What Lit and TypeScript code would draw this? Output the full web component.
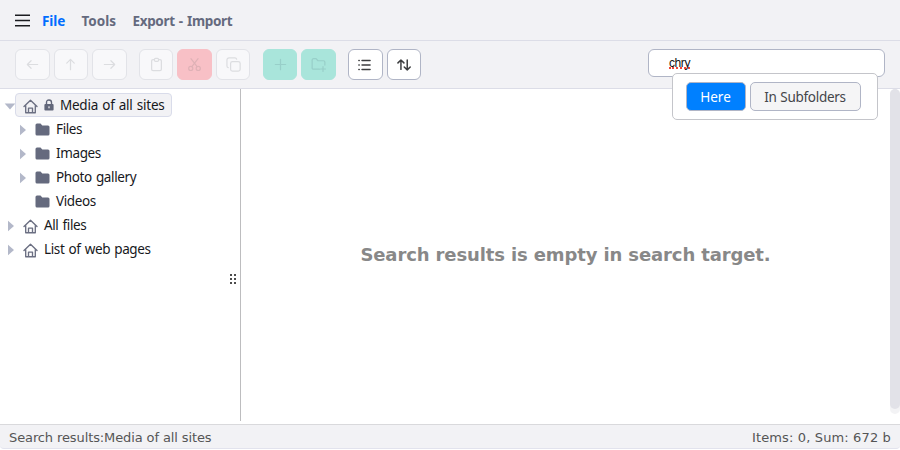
import { LitElement, html, svg, css, nothing } from 'lit';
import { customElement, property } from 'lit/decorators.js';
import { classMap } from 'lit/directives/class-map.js';

const ICONS: Record<string, unknown> = {
  left: svg`<path d="M13.5 8H2.5M6.5 4L2.5 8L6.5 12"/>`,
  up: svg`<path d="M8 13.5V2.5M4 6.5L8 2.5L12 6.5"/>`,
  right: svg`<path d="M2.5 8H13.5M9.5 4L13.5 8L9.5 12"/>`,
  paste: svg`<path d="M5.8 2.8H4.3Q2.8 2.8 2.8 4.3V13Q2.8 14.5 4.3 14.5H11.7Q13.2 14.5 13.2 13V4.3Q13.2 2.8 11.7 2.8H10.2"/><rect x="5.8" y="1.4" width="4.4" height="3.2" rx="1.2"/>`,
  cut: svg`<circle cx="4" cy="12.2" r="2.2"/><circle cx="12" cy="12.2" r="2.2"/><path d="M5.2 10.3L11.8 1.8M10.8 10.3L4.2 1.8"/>`,
  copy: svg`<rect x="4.9" y="4.9" width="10.2" height="10.2" rx="2"/><path d="M2.4 11.4Q1 11 1 9.6V3.4Q1 1 3.4 1H9.6Q11 1 11.4 2.4"/>`,
  plus: svg`<path d="M8 2.5V13.5M2.5 8H13.5"/>`,
  folderAdd: svg`<path d="M9 13H2.8Q1.2 13 1.2 11.4V3.4Q1.2 1.8 2.8 1.8H5.4L7.4 4H13.2Q14.8 4 14.8 5.6V8.6M12.8 10.2V15.4M10.2 12.8H15.4"/>`,
  list: svg`<path d="M4.6 2.8H13.8M4.6 8H13.8M4.6 13.2H13.8M1 2.8H1.4M1 8H1.4M1 13.2H1.4"/>`,
  sort: svg`<path d="M4.5 13V2.2M1.1 5.6L4.5 2.2L7.9 5.6M11.7 2.2V13.6M8.3 10.2L11.7 13.6L15.1 10.2"/>`,
};

@customElement('tool-button')
class ToolButton extends LitElement {
  @property() icon = '';
  @property() tone = 'idle';
  static styles = css`
    :host { display: block; }
    .button { box-sizing: border-box; width: 34.5px; height: 31px; border: 1px solid #e2e3e8; border-radius: 6px;
      background: #f8f8fa; color: #dcdde0; display: flex; align-items: center; justify-content: center; }
    .active { border-color: #b0b5c6; background: #fff; color: #3c3d3f; }
    .danger { border-color: #f8c0c6; background: #f8c0c6; color: #dfb1b6; }
    .success { border-color: #a9e5db; background: #a9e5db; color: #98cfc9; }
    svg { display: block; width: 15px; height: 15px; fill: none; stroke: currentColor; stroke-width: 1.3;
      stroke-linecap: round; stroke-linejoin: round; }
    .active svg { width: 14px; height: 14px; stroke-width: 1.7; }
  `;
  render() {
    return html`<div class=${classMap({ button: true, [this.tone]: true })}>
      <svg viewBox="0 0 16 16">${ICONS[this.icon]}</svg></div>`;
  }
}

@customElement('tree-row')
class TreeRow extends LitElement {
  @property() label = '';
  @property() kind = 'folder';
  @property() arrow = 'closed';
  @property({ type: Boolean }) nested = false;
  @property({ type: Boolean }) selected = false;
  static styles = css`
    :host { display: block; }
    .row { height: 24px; display: flex; align-items: center; padding-left: 4px; box-sizing: border-box; }
    .nested { padding-left: 16px; }
    .arrow { width: 12px; height: 12px; flex: none; fill: #b3b8c9; margin-top: 1px; }
    .item { box-sizing: border-box; height: 24px; display: flex; align-items: center; padding: 0 6px 0 7px; margin-left: -1px;
      border: 1px solid transparent; border-radius: 4px; }
    .selected { background: #f2f2f5; border-color: #d9dcea; }
    .home { width: 15px; height: 15px; margin-top: 2px; fill: none; stroke: #6b6f82; stroke-width: 1.35; stroke-linejoin: round; stroke-linecap: round; }
    .folder { width: 15px; height: 13px; margin-top: 1px; fill: #656a7e; }
    .lock { width: 10px; height: 12px; margin: -1px 0 0 6px; }
    .label { font: 13.5px/22px "Noto Sans", sans-serif; letter-spacing: -0.38px; word-spacing: 1px; color: #17181c; white-space: nowrap; margin-left: 6px; }
    .selected .label { letter-spacing: -0.25px; }
  `;
  render() {
    return html`<div class=${classMap({ row: true, nested: this.nested })}>
      <svg class="arrow" viewBox="0 0 12 12">${this.arrow === 'open'
        ? svg`<path d="M0.7 3.5H11.3L6 9.5Z"/>`
        : this.arrow === 'closed' ? svg`<path d="M4 0.8L10 6L4 11.2Z"/>` : nothing}</svg>
      <div class=${classMap({ item: true, selected: this.selected })}>
        ${this.kind === 'home'
          ? html`<svg class="home" viewBox="0 0 15 15"><path d="M1 7.6L7.5 1.2L14 7.6M2.7 6.4V13.7H12.3V6.4M5.5 13.5V9.1H9.5V13.5"/></svg>`
          : html`<svg class="folder" viewBox="0 0 15 13"><path d="M0.5 2Q0.5 0.5 2 0.5H5.5L7.3 2.4H13Q14.5 2.4 14.5 4V11Q14.5 12.5 13 12.5H2Q0.5 12.5 0.5 11Z"/></svg>`}
        ${this.selected ? html`<svg class="lock" viewBox="0 0 10 12"><path d="M2.5 6V3.5Q2.5 1 5 1T7.5 3.5V6" fill="none" stroke="#62677a" stroke-width="1.4"/><rect x="0.4" y="5" width="9.2" height="6.6" rx="1" fill="#62677a"/><rect x="4.4" y="7.3" width="1.2" height="2" fill="#f2f2f5"/></svg>` : nothing}
        <span class="label">${this.label}</span>
      </div>
    </div>`;
  }
}

@customElement('app-root')
class AppRoot extends LitElement {
  static styles = css`
    :host { display: flex; flex-direction: column; width: 900px; height: 450px; background: #fff; overflow: hidden; }
    .menu { flex: none; box-sizing: border-box; height: 41px; padding-left: 14.5px; display: flex; align-items: center; background: #f2f2f5;
      border-bottom: 1px solid #dcdde7; font: bold 13.5px/20px "Noto Sans", sans-serif; color: #656a7e; white-space: nowrap; }
    .menu span { padding-top: 1px; }
    .burger { width: 15px; height: 13px; margin-right: 12.5px; stroke: #1b1c20; stroke-width: 1.5; }
    .file { color: #006dff; width: 39.5px; letter-spacing: -0.1px; }
    .tools { width: 51px; letter-spacing: 0; }
    .export { letter-spacing: -0.34px; word-spacing: 1px; }
    .toolbar { flex: none; box-sizing: border-box; height: 48px; padding: 8px 15px 0; display: flex; align-items: flex-start;
      background: #f2f2f5; border-bottom: 1px solid #dcdde7; }
    .group { display: flex; gap: 4px; margin-right: 12.4px; }
    .search { position: relative; margin-left: auto; box-sizing: border-box; width: 237px; height: 28px; border: 1px solid #b0b5c6;
      border-radius: 6px; background: #fff; }
    .query { display: block; box-sizing: border-box; width: max-content; height: 14px; margin: 5px 0 0 20px; font: 12px/17px "Liberation Sans", sans-serif;
      letter-spacing: -0.4px; color: #111; border-bottom: 2px dotted #f04438; }
    .scope { position: absolute; z-index: 2; left: 22.5px; top: 23px; box-sizing: border-box; width: 206.5px; height: 47px; padding: 8px 13px;
      display: flex; gap: 4px; background: #fff; border: 1px solid #c4c5ca; border-radius: 5px; }
    .option { box-sizing: border-box; height: 29px; width: 111px; border: 1px solid #b0b5c6; border-radius: 5px; background: #f5f5f6; color: #444549;
      text-align: center; font: 13.5px/28px "Noto Sans", sans-serif; letter-spacing: -0.28px; word-spacing: 0.5px; white-space: nowrap; }
    .here { width: 60px; background: #0080ff; color: #fff; letter-spacing: 0; }
    .body { flex: none; height: 335px; display: flex; }
    .tree { position: relative; box-sizing: border-box; width: 241px; height: 332px; padding-top: 4px; border-right: 1px solid #bdbdbf; }
    .grip { position: absolute; left: 229px; top: 184px; width: 8px; height: 12px; fill: #111; }
    .results { flex: 1; display: flex; align-items: center; justify-content: center; }
    .empty { font: bold 18px/24px "DejaVu Sans", sans-serif; letter-spacing: -0.12px; color: #888; white-space: nowrap; margin-top: -4px; }
    .scroll { width: 10px; height: 325px; border-radius: 5px; background: #f3f3f5; }
    .thumb { height: 320px; border-radius: 5px; background: #e2e2e8; }
    .status { flex: none; box-sizing: border-box; height: 25px; padding: 0 9px; display: flex; justify-content: space-between;
      background: #f2f2f5; border-top: 1px solid #d9d9dc; border-bottom: 1px solid #e2e3ed; border-radius: 0 0 4px 4px;
      font: 13px/25px "DejaVu Sans", sans-serif; color: #555; white-space: nowrap; }
    .path { letter-spacing: -0.11px; }
    .sum { letter-spacing: 0.14px; }
  `;
  render() {
    return html`
      <nav class="menu">
        <svg class="burger" viewBox="0 0 15 13"><path d="M0 1.2H15M0 6.5H15M0 11.8H15"/></svg>
        <span class="file">File</span><span class="tools">Tools</span><span class="export">Export - Import</span>
      </nav>
      <div class="toolbar">
        <div class="group"><tool-button icon="left"></tool-button><tool-button icon="up"></tool-button><tool-button icon="right"></tool-button></div>
        <div class="group"><tool-button icon="paste"></tool-button><tool-button icon="cut" tone="danger"></tool-button><tool-button icon="copy"></tool-button></div>
        <div class="group"><tool-button icon="plus" tone="success"></tool-button><tool-button icon="folderAdd" tone="success"></tool-button></div>
        <div class="group"><tool-button icon="list" tone="active"></tool-button><tool-button icon="sort" tone="active"></tool-button></div>
        <div class="search"><span class="query">chry</span>
          <div class="scope"><div class="option here">Here</div><div class="option">In Subfolders</div></div>
        </div>
      </div>
      <div class="body">
        <div class="tree">
          <tree-row label="Media of all sites" kind="home" arrow="open" selected></tree-row>
          <tree-row label="Files" nested></tree-row>
          <tree-row label="Images" nested></tree-row>
          <tree-row label="Photo gallery" nested></tree-row>
          <tree-row label="Videos" arrow="none" nested></tree-row>
          <tree-row label="All files" kind="home"></tree-row>
          <tree-row label="List of web pages" kind="home"></tree-row>
          <svg class="grip" viewBox="0 0 8 12">${[2, 6].map(x => [2, 6, 10].map(y => svg`<circle cx=${x} cy=${y} r="1"/>`))}</svg>
        </div>
        <div class="results"><div class="empty">Search results is empty in search target.</div></div>
        <div class="scroll"><div class="thumb"></div></div>
      </div>
      <footer class="status"><span class="path">Search results:Media of all sites</span><span class="sum">Items: 0, Sum: 672 b</span></footer>
    `;
  }
}
